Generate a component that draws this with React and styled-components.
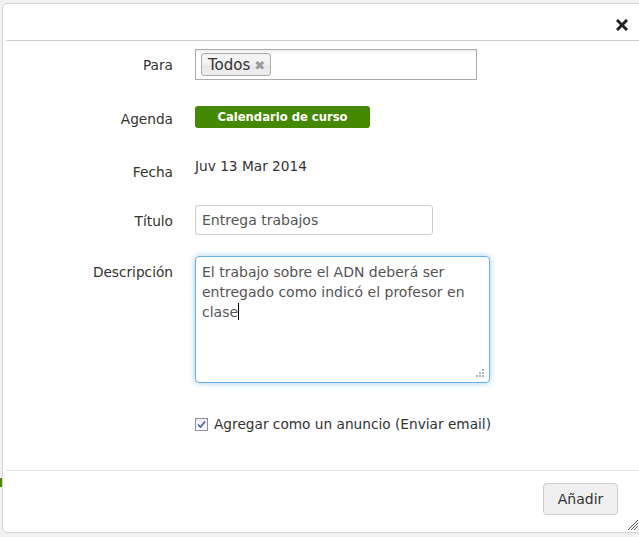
import React from "react";
import styled, { createGlobalStyle } from "styled-components";

const Global = createGlobalStyle`
  html, body { margin: 0; padding: 0; }
  body {
    background:
      linear-gradient(#4a8a00, #4a8a00) 0 478px / 2px 9px no-repeat,
      #f2f2f2;
    font-family: "DejaVu Sans", Verdana, sans-serif;
    color: #333;
  }
`;

const Page = styled.div`
  position: relative;
  width: 639px;
  height: 537px;
  overflow: hidden;
`;

const Modal = styled.div`
  position: absolute;
  left: 2px;
  top: 3px;
  width: 650px;
  height: 530px;
  background: #fff;
  border: 1px solid #d4d4d4;
  border-radius: 5px;
  display: flex;
  flex-direction: column;
  box-sizing: border-box;
`;

const Header = styled.div`
  height: 36px;
  margin-left: 3px;
  border-bottom: 1px solid #cfcfcf;
  display: flex;
  justify-content: flex-end;
  align-items: center;
  padding-right: 23px;
`;

const Close = styled.button`
  border: 0;
  background: none;
  padding: 0;
  margin-top: 6px;
  width: 12px;
  height: 12px;
  cursor: pointer;
  display: flex;
`;

const Body = styled.div`
  flex: 1;
  padding-top: 8px;
  font-size: 13.7px;
`;

const Row = styled.div`
  display: flex;
  align-items: flex-start;
  margin-top: ${(p) => p.$mt || 0}px;
`;

const Label = styled.div`
  width: 170px;
  padding-right: 22px;
  text-align: right;
  line-height: 20px;
  padding-top: ${(p) => p.$pt ?? 6}px;
  color: #333;
`;

const TagBox = styled.div`
  width: 282px;
  height: 31px;
  box-sizing: border-box;
  border: 1px solid #aaa;
  background: linear-gradient(#eee 1%, #fff 15%);
  padding: 3px 5px;
  display: flex;
  align-items: flex-start;
`;

const Tag = styled.span`
  display: inline-flex;
  align-items: center;
  gap: 4px;
  height: 23px;
  box-sizing: border-box;
  padding: 2px 5px 0 6px;
  border: 1px solid #aaa;
  border-radius: 3px;
  background: linear-gradient(#f4f4f4 20%, #f0f0f0 50%, #e8e8e8 52%, #eee 100%);
  color: #333;
  font-size: 15px;
  line-height: 19px;
`;

const TagX = styled.span`
  color: #9a9a9a;
  font-size: 13px;
  font-weight: bold;
  line-height: 1;
  margin-top: -1px;
`;

const CalButton = styled.button`
  width: 175px;
  height: 22px;
  border: 0;
  border-radius: 3px;
  background: #458900;
  color: #fff;
  font-family: "DejaVu Sans", Verdana, sans-serif;
  font-weight: bold;
  font-size: 11.6px;
  padding: 0;
  cursor: pointer;
`;

const Value = styled.div`
  line-height: 20px;
  color: #333;
`;

const TextInput = styled.div`
  width: 238px;
  height: 30px;
  box-sizing: border-box;
  border: 1px solid #ccc;
  border-radius: 3px;
  padding: 0 6px;
  line-height: 28px;
  color: #555;
  font-size: 14px;
`;

const TextArea = styled.div`
  position: relative;
  width: 295px;
  height: 127px;
  box-sizing: border-box;
  border: 1px solid #66afe9;
  border-radius: 4px;
  box-shadow: 0 0 6px rgba(102, 175, 233, 0.6);
  padding: 5px 6px;
  line-height: 20px;
  color: #555;
  font-size: 14px;
`;

const Caret = styled.span`
  display: inline-block;
  width: 1px;
  height: 17px;
  background: #000;
  vertical-align: -3px;
`;

const Grip = styled.svg`
  position: absolute;
  right: 5px;
  bottom: 5px;
`;

const CheckRow = styled.label`
  display: flex;
  align-items: center;
  gap: 6px;
  margin-left: 192px;
  line-height: 20px;
  color: #333;
`;

const CheckBox = styled.span`
  width: 13px;
  height: 13px;
  box-sizing: border-box;
  border: 1px solid #8f8f9d;
  background: linear-gradient(#eee, #fff);
  display: inline-flex;
  align-items: center;
  justify-content: center;
`;

const Footer = styled.div`
  margin-left: 3px;
  border-top: 1px solid #e3e3e3;
  height: 62px;
  display: flex;
  justify-content: flex-end;
  align-items: flex-start;
  padding-right: 33px;
  padding-top: 12px;
  box-sizing: border-box;
  position: relative;
`;

const AddButton = styled.button`
  width: 75px;
  height: 32px;
  border: 1px solid #ccc;
  border-radius: 4px;
  background: #f0f0f0;
  color: #333;
  font-family: "DejaVu Sans", Verdana, sans-serif;
  font-size: 14px;
  padding: 0;
  cursor: pointer;
`;

const ResizeGrip = styled.svg`
  position: absolute;
  left: 620px;
  bottom: 1px;
`;

export default function App() {
  return (
    <>
      <Global />
      <Page>
        <Modal>
          <Header>
            <Close aria-label="Cerrar">
              <svg width="12" height="12" viewBox="0 0 12 12">
                <path d="M2 2 L10 10 M10 2 L2 10" stroke="#222" strokeWidth="3" strokeLinecap="square" />
              </svg>
            </Close>
          </Header>
          <Body>
            <Row>
              <Label $pt={6}>Para</Label>
              <TagBox>
                <Tag>
                  Todos <TagX>✖</TagX>
                </Tag>
              </TagBox>
            </Row>
            <Row $mt={26}>
              <Label $pt={3}>Agenda</Label>
              <CalButton>Calendario de curso</CalButton>
            </Row>
            <Row $mt={27}>
              <Label $pt={6}>Fecha</Label>
              <Value>Juv 13 Mar 2014</Value>
            </Row>
            <Row $mt={23}>
              <Label $pt={6}>Título</Label>
              <TextInput>Entrega trabajos</TextInput>
            </Row>
            <Row $mt={21}>
              <Label $pt={6}>Descripción</Label>
              <TextArea>
                El trabajo sobre el ADN deberá ser entregado como indicó el profesor en clase
                <Caret />
                <Grip width="9" height="9" viewBox="0 0 9 9">
                  <g fill="#b5b5b5">
                    <rect x="7" y="1" width="2" height="2" />
                    <rect x="4" y="4" width="2" height="2" />
                    <rect x="7" y="4" width="2" height="2" />
                    <rect x="1" y="7" width="2" height="2" />
                    <rect x="4" y="7" width="2" height="2" />
                    <rect x="7" y="7" width="2" height="2" />
                  </g>
                </Grip>
              </TextArea>
            </Row>
            <Row $mt={31}>
              <CheckRow>
                <CheckBox>
                  <svg width="9" height="9" viewBox="0 0 9 9">
                    <path d="M1 4.5 L3.5 7 L8 1.5" stroke="#4a5a9a" strokeWidth="1.6" fill="none" />
                  </svg>
                </CheckBox>
                Agregar como un anuncio (Enviar email)
              </CheckRow>
            </Row>
          </Body>
          <Footer>
            <AddButton>Añadir</AddButton>
            <ResizeGrip width="13" height="13" viewBox="0 0 13 13">
              <path d="M12 2 L2 12 M12 5 L5 12 M12 8 L8 12" stroke="#555" strokeWidth="1" />
            </ResizeGrip>
          </Footer>
        </Modal>
      </Page>
    </>
  );
}
